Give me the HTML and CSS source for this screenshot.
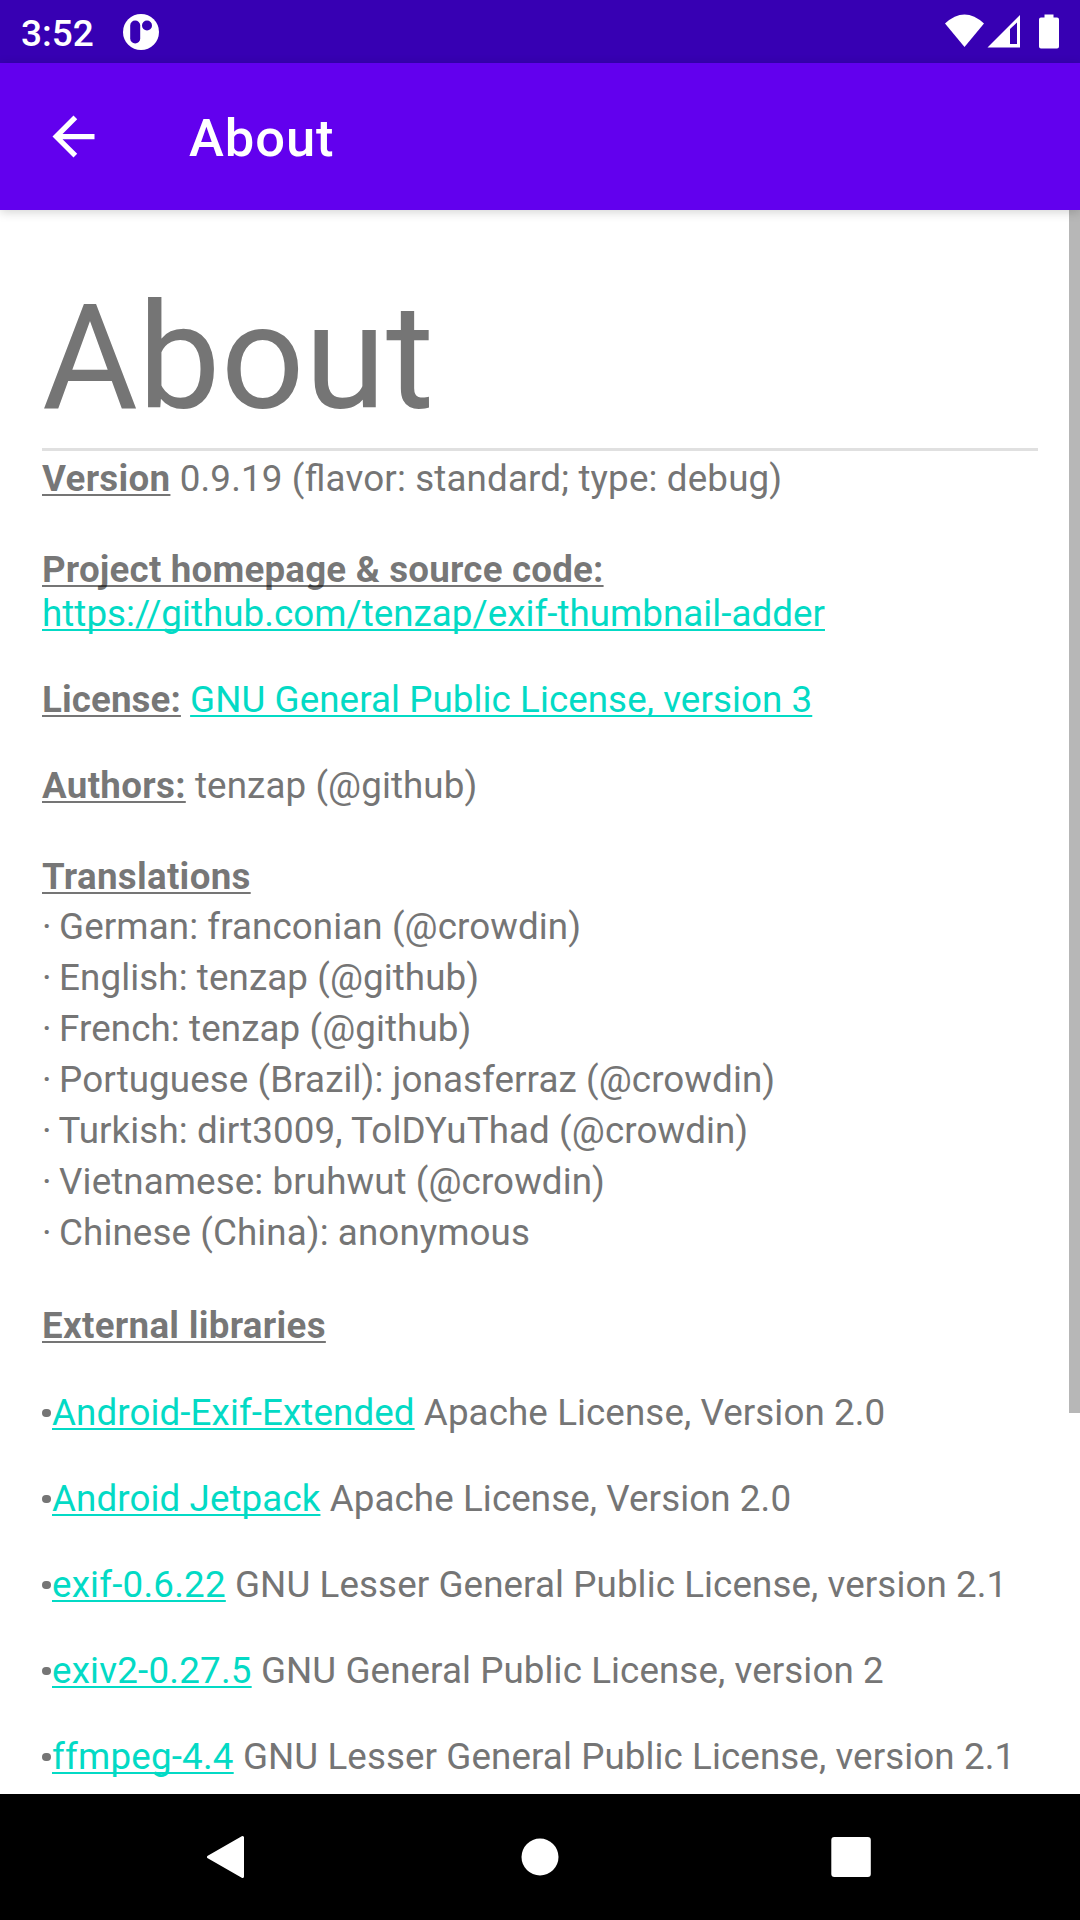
FILE: index.html
```html
<!DOCTYPE html>
<html lang="en">
<head>
<meta charset="utf-8">
<title>About</title>
<link rel="stylesheet" href="styles.css">
</head>
<body>
<div class="screen">
  <header class="status">
    <span class="clock">3:52</span>
    <svg class="notif" viewBox="0 0 36 36"><circle cx="18" cy="18" r="18" fill="#fff"/><rect x="7.200" y="6.500" width="10" height="23" rx="5" fill="#3700b3"/><circle cx="24" cy="11.500" r="5" fill="#3700b3"/></svg>
    <svg class="signals" viewBox="0 0 116 36"><path d="M2 9.500Q21.500-8.500 41 9.500L21.500 33Z" fill="#fff"/><path d="M44.500 33.500L77 1V33.500Z" fill="#fff"/><path d="M67 15L74 8.500V30H67Z" fill="#3700b3"/><path d="M101.500 .500H110.500V3.500H114Q116 3.500 116 5.500V32.500Q116 34.500 114 34.500H98Q96 34.500 96 32.500V5.500Q96 3.500 98 3.500H101.500Z" fill="#fff"/></svg>
  </header>
  <div class="toolbar">
    <svg class="back" viewBox="0 0 24 24"><path d="M20 11H7.830l5.590-5.590L12 4l-8 8 8 8 1.410-1.410L7.830 13H20v-2z" fill="#fff"/></svg>
    <span class="title">About</span>
  </div>
  <main class="content">
    <h1>About</h1>
    <p class="version"><b>Version</b> 0.9.19 (flavor: standard; type: debug)</p>
    <p class="project"><b>Project homepage &amp; source code:</b></p>
    <p class="url"><a>https://github.com/tenzap/exif-thumbnail-adder</a></p>
    <p class="spaced license"><b>License:</b> <a>GNU General Public License, version 3</a></p>
    <p class="spaced"><b>Authors:</b> tenzap (@github)</p>
    <p class="translations"><b>Translations</b></p>
    <ul class="people">
      <li><span class="dot">·</span> German: franconian (@crowdin)</li>
      <li><span class="dot">·</span> English: tenzap (@github)</li>
      <li><span class="dot">·</span> French: tenzap (@github)</li>
      <li><span class="dot">·</span> Portuguese (Brazil): jonasferraz (@crowdin)</li>
      <li><span class="dot">·</span> Turkish: dirt3009, TolDYuThad (@crowdin)</li>
      <li><span class="dot">·</span> Vietnamese: bruhwut (@crowdin)</li>
      <li><span class="dot">·</span> Chinese (China): anonymous</li>
    </ul>
    <p class="libraries"><b>External libraries</b></p>
    <ul class="libs">
      <li><a>Android-Exif-Extended</a> Apache License, Version 2.0</li>
      <li><a>Android Jetpack</a> Apache License, Version 2.0</li>
      <li><a class="numbered">exif-0.6.22</a> GNU Lesser General Public License, version 2.1</li>
      <li><a class="numbered">exiv2-0.27.5</a> GNU General Public License, version 2</li>
      <li><a class="numbered">ffmpeg-4.4</a> GNU Lesser General Public License, version 2.1</li>
    </ul>
    <div class="scrollbar"></div>
  </main>
  <nav class="nav">
    <svg viewBox="0 0 42 44"><path d="M35.500 2.500V41.500L1.500 22Z" fill="#fff" stroke="#fff" stroke-width="3" stroke-linejoin="round"/></svg>
    <svg viewBox="0 0 42 44"><circle cx="21" cy="22" r="18.500" fill="#fff"/></svg>
    <svg viewBox="0 0 42 44"><rect x="1.300" y="2" width="39.500" height="40" rx="3" fill="#fff"/></svg>
  </nav>
</div>
</body>
</html>
```
FILE: styles.css
```css
* { box-sizing: border-box; }
body { margin: 0; font-family: Roboto, sans-serif; background: #fff; }
.screen { width: 1080px; height: 1920px; display: flex; flex-direction: column; overflow: hidden; }
.status { height: 63px; flex: none; background: #3700b3; display: flex; align-items: center; padding: 0 21px; color: #fff; }
.clock { font-size: 37px; font-weight: 500; line-height: 63px; padding-top: 3px; }
.notif { width: 36px; height: 36px; margin-left: 29px; }
.signals { width: 116px; height: 36px; margin-left: auto; }
.toolbar { height: 147px; flex: none; background: #6200ee; color: #fff; display: flex; align-items: center; padding-left: 42px; position: relative; z-index: 1; box-shadow: 0 2px 10px #0000002e; }
.back { width: 63px; height: 63px; }
.title { margin-left: 84px; font-size: 52.500px; font-weight: 500; line-height: 62px; padding-top: 3px; letter-spacing: .95px; }
.content { flex: 1; min-height: 0; overflow: hidden; position: relative; padding: 0 42px; color: #757575; font-size: 36.750px; line-height: 43px; letter-spacing: .09px; white-space: nowrap; }
h1 { margin: 0; height: 241px; padding-top: 62px; font-size: 147px; line-height: 172px; font-weight: 400; letter-spacing: .2px; border-bottom: 3px solid #e0e0e0; }
p, ul { margin: 0; padding: 0; list-style: none; }
b { font-weight: 700; letter-spacing: .28px; color: rgba(0, 0, 0, .54); }
b, a { text-decoration: underline; text-decoration-thickness: 2px; text-underline-offset: 3px; text-decoration-skip-ink: none; }
a { color: #03dac5; }
.version { margin-top: 6px; letter-spacing: .15px; font-feature-settings: "liga" 1; }
.project { margin-top: 48px; }
.project b { letter-spacing: .17px; }
.url { margin-top: 1px; letter-spacing: .03px; }
.spaced { margin-top: 43px; }
.license { letter-spacing: .07px; }
.license b { letter-spacing: .08px; }
.translations { margin-top: 48px; }
.people { margin-top: 3px; line-height: 51px; }
.dot { margin-right: -1.800px; }
.libraries { margin-top: 46px; }
.libs { margin-top: 44px; display: flex; flex-direction: column; gap: 43px; }
.libs li { padding-left: 10px; position: relative; }
.libs li::before { content: ""; position: absolute; left: 0; top: 17.500px; width: 8.500px; height: 8.500px; border-radius: 50%; background: #757575; }
.numbered { letter-spacing: .2px; }
.scrollbar { position: absolute; top: 0; right: 0; width: 11px; height: 1203px; background: #b7b7b7; }
.nav { height: 126px; flex: none; background: #000; display: flex; justify-content: space-between; align-items: center; padding: 0 207px; }
.nav svg { width: 42px; height: 44px; }
.nav svg:last-child { margin-right: 1px; }
```
